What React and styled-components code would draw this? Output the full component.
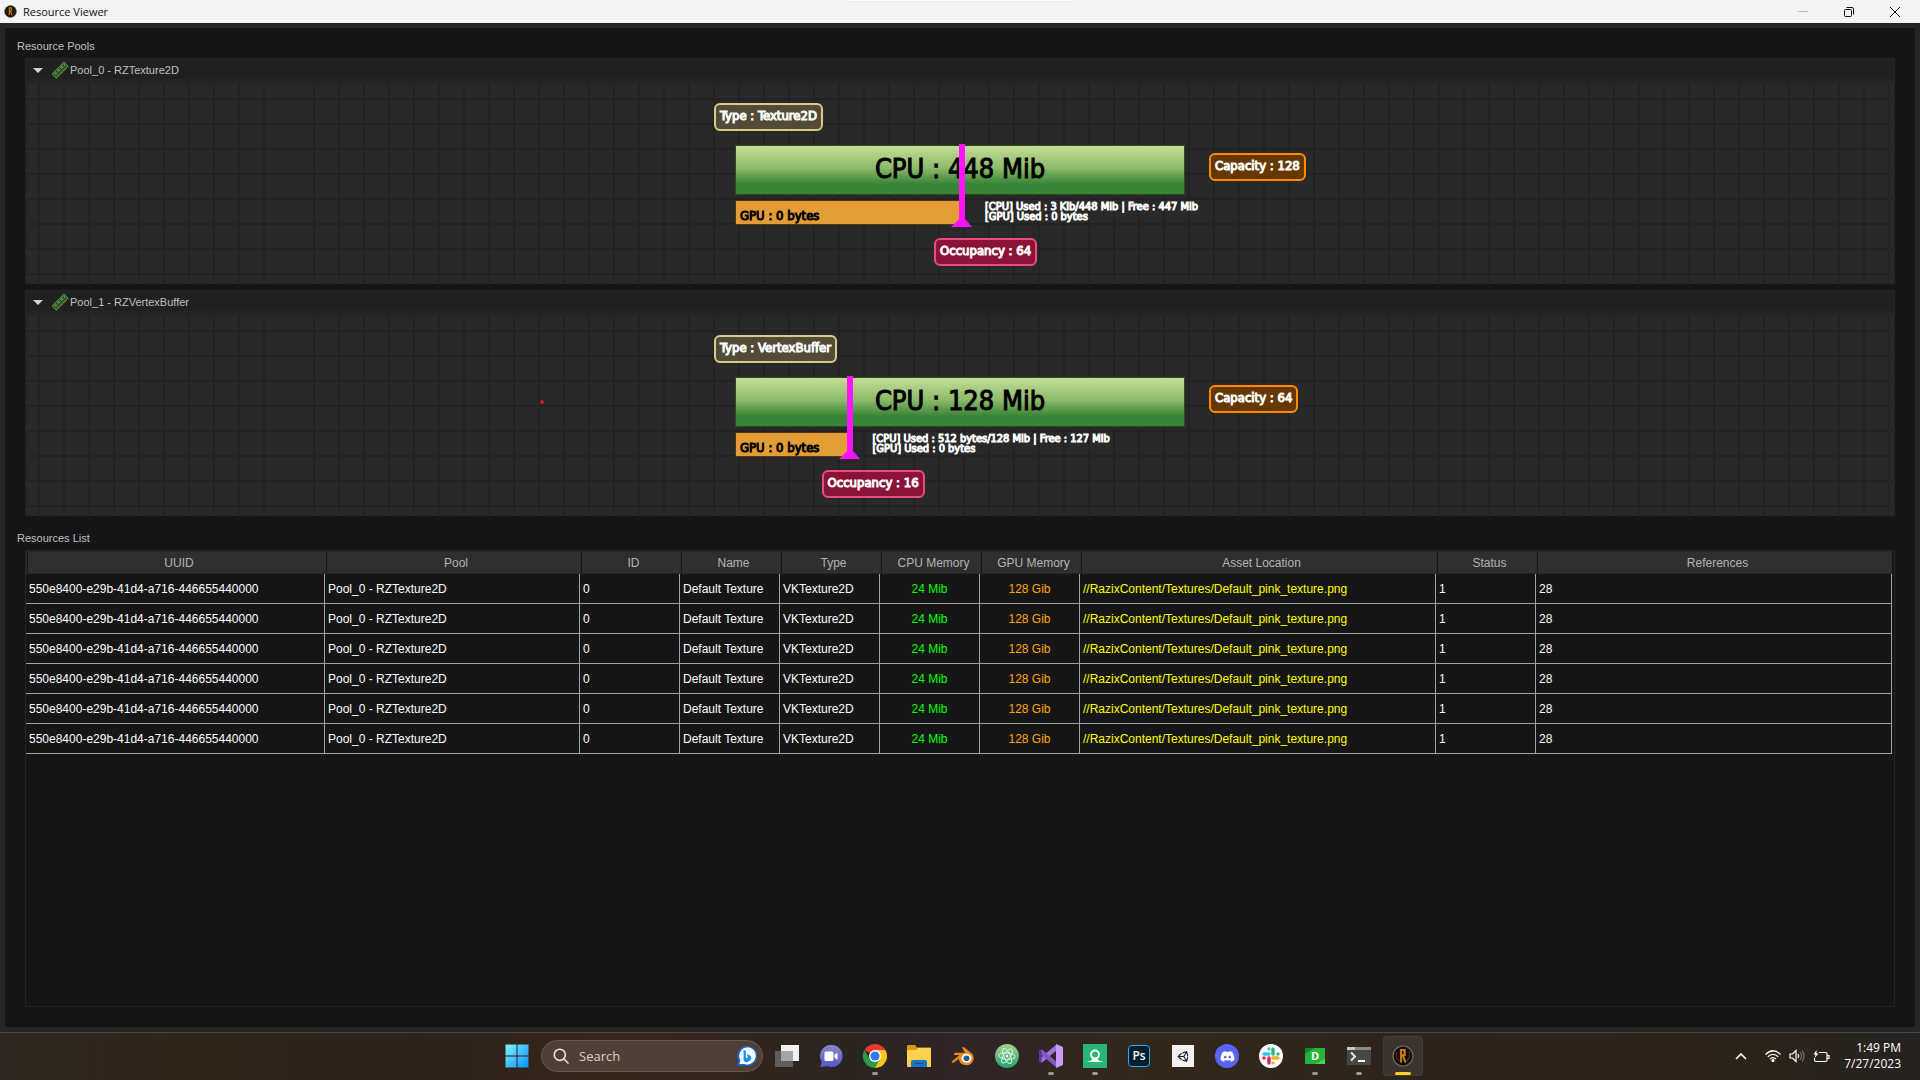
/* eslint-disable react/prop-types */
import styled, { createGlobalStyle, css } from "styled-components";
import { FaDiscord, FaUnity } from "react-icons/fa";

const GlobalStyle = createGlobalStyle`
  *, *::before, *::after {
    box-sizing: border-box;
  }
  body {
    margin: 0;
    background: #161616;
    font-family: "Liberation Sans", Arial, sans-serif;
    font-size: 12px;
  }
  button {
    border: 0;
    padding: 0;
    background: none;
    font: inherit;
    color: inherit;
  }
  svg {
    display: block;
  }
`;

const Desktop = styled.div`
  display: flex;
  flex-direction: column;
  min-height: 100vh;
`;

/* ---------- window ---------- */

const TitleBar = styled.header`
  position: relative;
  display: flex;
  align-items: center;
  height: 23px;
  padding: 0 2px 0 4px;
  background: #f3f3f3;
  color: #111;
  /* snap layout handle peeking from the top edge */
  &::after {
    content: "";
    position: absolute;
    top: 0;
    left: 50%;
    width: 224px;
    height: 1px;
    margin-left: -112px;
    background: #fff;
    box-shadow: 0 1px 1px #e4e4e4;
  }
`;

const Title = styled.h1`
  flex: 1;
  margin: 0 0 0 6px;
  font: 400 11px/16px "Open Sans", "Noto Sans", sans-serif;
`;

const WindowButton = styled.button`
  display: flex;
  align-items: center;
  justify-content: center;
  width: 46px;
  height: 22px;
  color: ${({ $muted }) => ($muted ? "#bdbdbd" : "#111")};
`;

const WindowBody = styled.main`
  flex: 1;
  display: flex;
  flex-direction: column;
  padding: 10px 20px 20px;
  border: 5px solid #252525;
  background: #161616;
`;

const labelText = css`
  font-size: 11px;
  font-weight: 400;
  line-height: 16px;
  color: #c0c0c0;
`;

const GroupLabel = styled.h2`
  ${labelText}
  margin: 0 0 4px -8px;
`;

const PoolList = styled.div`
  display: flex;
  flex-direction: column;
  gap: 6px;
  margin-bottom: 14px;
`;

/* ---------- pool panel ---------- */

const Panel = styled.section`
  border: 1px solid #252525;
  background: #252525;
`;

const PanelHeader = styled.button`
  ${labelText}
  display: flex;
  align-items: center;
  width: 100%;
  height: 20px;
  padding: 2px 0 0 7px;
  background: #202020;
`;

const Caret = styled.svg`
  width: 10px;
  height: 5px;
  margin-right: 8px;
  fill: #d2d2d2;
`;

const PanelTitle = styled.span`
  margin-left: 1px;
`;

const Scene = styled.div`
  position: relative;
  display: grid;
  grid-template-columns: 1fr 450px 1fr;
  grid-template-rows: 37px 50px 25px 36px;
  row-gap: 5px;
  margin: 5px 1px 0;
  padding: 19px 0 17px;
  background:
    linear-gradient(#232323 2px, transparent 2px) 0 14px / 100% 25px,
    linear-gradient(#292929, #292929) 261px 0 / 2px 100% no-repeat,
    linear-gradient(90deg, #232323 2px, transparent 2px) 11px 0 / 25px 100%,
    #292929;
`;

const sceneText = css`
  font-family: "DejaVu Sans Condensed", "DejaVu Sans", Tahoma, sans-serif;
  font-stretch: condensed;
  white-space: nowrap;
`;

const tones = {
  type: { line: "#dcc988", fill: "#514b37" },
  capacity: { line: "#ff8c00", fill: "#663800" },
  occupancy: { line: "#e84d7e", fill: "#8b1338" },
};

const Badge = styled.span`
  ${sceneText}
  align-self: start;
  justify-self: start;
  height: 28px;
  padding: 0 4px;
  border: 2px solid ${({ $tone }) => tones[$tone].line};
  border-radius: 6px;
  background: ${({ $tone }) => tones[$tone].fill};
  color: #fff;
  font-size: 13px;
  line-height: 22px;
  -webkit-text-stroke: 1px #fff;
`;

const TypeBadge = styled(Badge)`
  grid-area: 1 / 2;
  margin-left: -21px;
`;

const CapacityBadge = styled(Badge)`
  grid-area: 2 / 3;
  margin: 8px 0 0 24px;
`;

const OccupancyBadge = styled(Badge)`
  grid-area: 4 / 2;
  align-self: end;
  margin-left: calc(${({ $percent }) => $percent}% - 26px);
`;

const CpuBar = styled.div`
  ${sceneText}
  grid-area: 2 / 2;
  border: 1px solid #2c4a20;
  background: linear-gradient(#c5dd96, #8fbb6c 45%, #388336 80%);
  color: #000;
  font-size: 27px;
  line-height: 45px;
  text-align: center;
  -webkit-text-stroke: 1px #000;
`;

const GpuRow = styled.div`
  ${sceneText}
  grid-area: 3 / 2;
  display: flex;
`;

const GpuBar = styled.div`
  flex: none;
  width: ${({ $percent }) => $percent}%;
  height: 25px;
  padding-left: 4px;
  border: 1px solid #4f3710;
  background: #e49d36;
  color: #000;
  font-size: 13px;
  line-height: 30px;
  -webkit-text-stroke: 1px #000;
`;

const Usage = styled.div`
  margin-left: 25px;
  padding-top: 2px;
  color: #fff;
  font-size: 11px;
  line-height: 10px;
  -webkit-text-stroke: 1px #fff;
`;

const Marker = styled.svg`
  grid-area: 2 / 2 / 4 / 3;
  width: 21px;
  height: 83px;
  margin: -1px 0 0 calc(${({ $percent }) => $percent}% - 9px);
  fill: #ff14ff;
`;

const Probe = styled.span`
  position: absolute;
  left: 27.5%;
  top: 42%;
  width: 4px;
  height: 4px;
  border-radius: 50%;
  background: #d01c2c;
`;

/* ---------- resource table ---------- */

const TableFrame = styled.div`
  flex: 1;
  padding-right: 2px;
  border: 1px solid #252525;
`;

const Table = styled.table`
  width: 100%;
  table-layout: fixed;
  border-collapse: separate;
  border-spacing: 0;
  font-size: 12px;
`;

const HeadCell = styled.th`
  height: 23px;
  padding: 0 0 0 7px;
  border-top: 1px solid #252525;
  border-bottom: 1px solid #252525;
  background: linear-gradient(90deg, #2f2f2f 1px, #161616 1px 2px, #2f2f2f 2px);
  color: #b4b4b4;
  font-weight: 400;
`;

const Cell = styled.td`
  height: 30px;
  padding: ${({ $center }) => ($center ? "0" : "0 0 0 3px")};
  border-right: 1px solid #a2a2a2;
  border-bottom: 1px solid #a2a2a2;
  color: ${({ $color }) => $color || "#fff"};
  text-align: ${({ $center }) => ($center ? "center" : "left")};
  white-space: nowrap;
  overflow: hidden;
`;

/* ---------- taskbar ---------- */

const Taskbar = styled.footer`
  display: grid;
  grid-template-columns: 1fr auto 1fr;
  align-items: center;
  height: 48px;
  padding-bottom: 1px;
  border-top: 1px solid #4a4642;
  background: linear-gradient(
    90deg,
    #2d2721,
    #302617 10%,
    #2c241c 22%,
    #382519 32%,
    #2b2521 44%,
    #2f2427 50%,
    #32281a 60%,
    #2c241d 75%,
    #2d2418 87%,
    #252321
  );
  color: #fff;
  font-family: "Open Sans", "Noto Sans", sans-serif;
`;

const Dock = styled.nav`
  grid-column: 2;
  display: flex;
  align-items: center;
  gap: 4px;
`;

const DockButton = styled.button`
  position: relative;
  display: flex;
  align-items: center;
  justify-content: center;
  width: 40px;
  height: 40px;
  border-radius: 4px;
  ${({ $active }) =>
    $active &&
    css`
      background: #3a332e;
      box-shadow: inset 0 0 0 1px #433c37;
    `}
  ${({ $running, $active }) =>
    $running &&
    css`
      &::after {
        content: "";
        position: absolute;
        bottom: 1px;
        left: 50%;
        width: ${$active ? 16 : 6}px;
        height: 3px;
        border-radius: 2px;
        background: ${$active ? "#ffd22b" : "#9b9794"};
        transform: translateX(-50%);
      }
    `}
`;

const SearchBox = styled.label`
  display: flex;
  align-items: center;
  width: 222px;
  height: 32px;
  padding: 0 5px 0 11px;
  border: 1px solid #66574e;
  border-radius: 16px;
  background: #503f35;
`;

const SearchInput = styled.input`
  flex: 1;
  min-width: 0;
  margin-left: 10px;
  padding: 0;
  border: 0;
  outline: 0;
  background: none;
  color: #fff;
  font: 13px/18px "Open Sans", "Noto Sans", sans-serif;
  &::placeholder {
    color: #d6d0cc;
    opacity: 1;
  }
`;

const Tray = styled.div`
  display: flex;
  align-items: center;
  justify-content: flex-end;
  padding-right: 19px;
`;

const TrayButton = styled.button`
  display: flex;
  align-items: center;
  justify-content: center;
  width: ${({ $wide }) => ($wide ? 40 : 24)}px;
  height: 40px;
`;

const Clock = styled.time`
  width: 68px;
  font-size: 12px;
  line-height: 16px;
  text-align: right;
`;

/* ---------- drawings ---------- */

const RazixIcon = ({ size }) => (
  <svg width={size} height={size} viewBox="0 0 22 22">
    <circle cx="11" cy="11" r="10" fill="#120d0a" stroke="#77716c" strokeWidth="1.200" />
    <path d="M5 7q-2 5 2 9M17 6q2 5-2 10" stroke="#4a2a12" strokeWidth="1.600" fill="none" />
    <path d="M9 17.500V5h3.600v5H9.400M11 10.500l2.400 7" fill="none" stroke="#c07a18" strokeWidth="2.200" />
  </svg>
);

const RamIcon = () => (
  <svg width="18" height="18" viewBox="0 0 18 18">
    <path d="M1 13 13 1l4 4L5 17z" fill="#2f5a1c" stroke="#4f9a24" />
    <path d="M5.500 17.500 17.500 6" stroke="#9a7a22" strokeDasharray="1 1" />
    <path d="m4 13 1.500-1.500M7 10l1.500-1.500M10 7l1.500-1.500M13 4.500 14 3.500" stroke="#6d8396" strokeWidth="2.200" />
  </svg>
);

const StartIcon = () => (
  <svg width="24" height="24" viewBox="0 0 24 24">
    <defs>
      <linearGradient id="win" x1="0" y1="0" x2="1" y2="1">
        <stop offset="0" stopColor="#7df3ff" />
        <stop offset="1" stopColor="#0a8ff5" />
      </linearGradient>
    </defs>
    <path d="M.5.5h11v11H.5zM12.500.5h11v11h-11zM.5 12.500h11v11H.5zM12.500 12.500h11v11h-11z" fill="url(#win)" />
  </svg>
);

const MagnifierIcon = () => (
  <svg width="16" height="16" viewBox="0 0 16 16" fill="none" stroke="#e8e4e1" strokeWidth="1.600" strokeLinecap="round">
    <circle cx="6.800" cy="6.800" r="5.600" />
    <path d="m11 11 4 4" />
  </svg>
);

const BingIcon = () => (
  <svg width="20" height="20" viewBox="0 0 20 20">
    <path d="M10 0a10 10 0 1 1-3 19.500L0 20l1.500-5A10 10 0 0 1 10 0z" fill="#1565d8" />
    <path d="M10.300 1.200a8.600 8.600 0 1 1-3 16.700L2.500 18l.8-4A8.600 8.600 0 0 1 10.300 1.200z" fill="#f4faff" />
    <path d="M6.600 3.800v9.500c0 3 3 3.400 5 2.200 3.600-2 3.500-5.400.5-6.500l-2.400-.8 1.300 3-2.100 1.100V5z" fill="#1f8fe8" />
  </svg>
);

const TaskViewIcon = () => (
  <svg width="24" height="22" viewBox="0 0 24 22">
    <path d="M6 0h18v16H6z" fill="#f1f1f1" />
    <path d="M0 6h18v16H0z" fill="#5d5d5d" />
    <path d="M6 6h12v10H6z" fill="#a5a5a5" />
  </svg>
);

const ChatIcon = () => (
  <svg width="24" height="24" viewBox="0 0 24 24">
    <defs>
      <linearGradient id="chat" x1="0" y1="0" x2="0" y2="1">
        <stop offset="0" stopColor="#8f86c4" />
        <stop offset="1" stopColor="#5458cf" />
      </linearGradient>
    </defs>
    <path d="M12.500 1a11 11 0 1 1-4 21.200L1 23l1.800-5A11 11 0 0 1 12.500 1z" fill="url(#chat)" />
    <rect x="5.500" y="7.500" width="9" height="9.500" rx="1.500" fill="#fff" />
    <path d="m15.500 11 3-2.500v7.500l-3-2.500z" fill="#fff" />
  </svg>
);

const ChromeIcon = () => (
  <svg width="24" height="24" viewBox="0 0 24 24">
    <path d="M12 12 1.600 6A12 12 0 0 1 22.400 6z" fill="#e63b2e" />
    <path d="M12 12V6h10.400A12 12 0 0 1 12 24z" fill="#fcc31e" />
    <path d="m12 12 5 3-5 9A12 12 0 0 1 1.600 6l5.200 9z" fill="#2b9b47" />
    <circle cx="12" cy="12" r="6" fill="#fff" />
    <circle cx="12" cy="12" r="4.600" fill="#2f7bf0" />
  </svg>
);

const FolderIcon = () => (
  <svg width="24" height="22" viewBox="0 0 24 22">
    <path d="M0 1q0-1 1-1h7l2 2.500h14V8H0z" fill="#dd9a0c" />
    <path d="M0 5h9l2-2h13v18q0 1-1 1H1q-1 0-1-1z" fill="#ffd052" />
    <path d="M4 22v-5q0-2 2-2h12q2 0 2 2v5z" fill="#1976c8" />
    <path d="M8 18h8v1H8z" fill="#0f4f93" />
  </svg>
);

const BlenderIcon = () => (
  <svg width="24" height="20" viewBox="0 0 24 20">
    <path d="M11 1.500q1-1.200 2.400 0l7.800 6.200a7.200 7.200 0 0 1-4.800 11.500c-5.500.6-8.600-3-8.500-6.500L3 16.500q-2 .8-2.500-.8L8.500 9H3.700q-1.200-1.200.3-2.300h10z" fill="#f0861a" />
    <ellipse cx="15.500" cy="12.200" rx="5" ry="4.500" fill="#fff" />
    <ellipse cx="15.500" cy="12.200" rx="3" ry="2.800" fill="#1f5c9b" />
  </svg>
);

const AtomIcon = () => (
  <svg width="24" height="24" viewBox="0 0 24 24">
    <defs>
      <linearGradient id="atom" x1="0" y1="0" x2="0" y2="1">
        <stop offset="0" stopColor="#a3d48c" />
        <stop offset="1" stopColor="#1fa36f" />
      </linearGradient>
    </defs>
    <circle cx="12" cy="12" r="12" fill="url(#atom)" />
    <g fill="none" stroke="#e9f8ee" strokeWidth="0.900">
      <ellipse cx="12" cy="12" rx="3.200" ry="8.300" transform="rotate(-25 12 12)" />
      <ellipse cx="12" cy="12" rx="3.200" ry="8.300" transform="rotate(35 12 12)" />
      <ellipse cx="12" cy="12" rx="3.200" ry="8.300" transform="rotate(95 12 12)" />
    </g>
    <circle cx="12" cy="12" r="1.200" fill="#fff" />
  </svg>
);

const VisualStudioIcon = () => (
  <svg width="24" height="24" viewBox="0 0 24 24">
    <path d="M0 17.500V6.500L2.500 5v14z" fill="#5e3699" />
    <path d="m2.500 19 15.500-13V0L2.500 13z" fill="#a073e0" />
    <path d="M2.500 5 18 18v6L2.500 11z" fill="#8456c6" />
    <path d="m17 0 7 3v18l-7 3z" fill="#c79bf7" />
  </svg>
);

const PersonIcon = () => (
  <svg width="24" height="24" viewBox="0 0 24 24">
    <path d="M0 0h24v24H0z" fill="#29b573" />
    <path d="M3 18q5.500-.5 6.500-3.500h5q1 3 6.500 3.500z" fill="#fff" />
    <circle cx="12" cy="10.500" r="4" fill="#29b573" stroke="#fff" strokeWidth="2" />
  </svg>
);

const PhotoshopTile = styled.span`
  width: 22px;
  height: 22px;
  border: 1px solid #31a8ff;
  border-radius: 4px;
  background: #001e2b;
  color: #fff;
  font-size: 12px;
  font-weight: 600;
  line-height: 19px;
  text-align: center;
`;

const UnityTile = styled.span`
  display: flex;
  align-items: center;
  justify-content: center;
  width: 22px;
  height: 22px;
  background: #f2f2f2;
  color: #222;
  font-size: 13px;
`;

const RoundTile = styled.span`
  display: flex;
  align-items: center;
  justify-content: center;
  width: 24px;
  height: 24px;
  border-radius: 50%;
  background: ${({ $color }) => $color};
  color: #fff;
  font-size: 15px;
`;

const SlackIcon = () => (
  <svg width="18" height="18" viewBox="0 0 18 18" strokeWidth="3.400" strokeLinecap="round">
    <path d="M7 2v0M2 7h5" stroke="#36c5f0" />
    <path d="M11 7V2M16 7v0" stroke="#2eb67d" />
    <path d="M11 11h5M11 16v0" stroke="#ecb22e" />
    <path d="M7 11v5M2 11v0" stroke="#e01e5a" />
  </svg>
);

const DTile = styled.span`
  width: 20px;
  height: 16px;
  background: linear-gradient(150deg, #14852a 20%, #26b33c 21% 80%, #53ce5c 81%);
  color: #fff;
  font-size: 11px;
  font-weight: 700;
  line-height: 16px;
  text-align: center;
`;

const TerminalIcon = () => (
  <svg width="24" height="18" viewBox="0 0 24 18">
    <path d="M0 0h24v18H0z" fill="#474747" />
    <path d="M0 0h24v3H0z" fill="#8a8a8a" />
    <path d="M0 0h8v3H0z" fill="#c9c9c9" />
    <path d="m4 5.500 4 4-4 4" fill="none" stroke="#e5e5e5" strokeWidth="2" />
    <path d="M11 14h7" stroke="#fff" strokeWidth="2" />
  </svg>
);

/* ---------- data ---------- */

const pools = [
  {
    name: "Pool_0 - RZTexture2D",
    type: "Texture2D",
    cpu: "448 Mib",
    used: "3 Kib/448 Mib | Free : 447 Mib",
    capacity: 128,
    occupancy: 64,
  },
  {
    name: "Pool_1 - RZVertexBuffer",
    type: "VertexBuffer",
    cpu: "128 Mib",
    used: "512 bytes/128 Mib | Free : 127 Mib",
    capacity: 64,
    occupancy: 16,
    probe: true,
  },
];

const columns = [
  { title: "UUID", width: 299, value: "550e8400-e29b-41d4-a716-446655440000" },
  { title: "Pool", width: 255, value: "Pool_0 - RZTexture2D" },
  { title: "ID", width: 100, value: "0" },
  { title: "Name", width: 100, value: "Default Texture" },
  { title: "Type", width: 100, value: "VKTexture2D" },
  { title: "CPU Memory", width: 100, value: "24 Mib", color: "#00ff00", center: true },
  { title: "GPU Memory", width: 100, value: "128 Gib", color: "#ffa500", center: true },
  { title: "Asset Location", value: "//RazixContent/Textures/Default_pink_texture.png", color: "#ffff00" },
  { title: "Status", width: 100, value: "1" },
  { title: "References", value: "28" },
];

const rows = [0, 1, 2, 3, 4, 5];

const apps = [
  { label: "Task View", icon: <TaskViewIcon /> },
  { label: "Chat", icon: <ChatIcon /> },
  { label: "Chrome", icon: <ChromeIcon />, running: true },
  { label: "File Explorer", icon: <FolderIcon /> },
  { label: "Blender", icon: <BlenderIcon /> },
  { label: "Atom", icon: <AtomIcon /> },
  { label: "Visual Studio", icon: <VisualStudioIcon />, running: true },
  { label: "Account", icon: <PersonIcon />, running: true },
  { label: "Photoshop", icon: <PhotoshopTile>Ps</PhotoshopTile> },
  { label: "Unity", icon: <UnityTile><FaUnity /></UnityTile> },
  { label: "Discord", icon: <RoundTile $color="#5865f2"><FaDiscord /></RoundTile> },
  { label: "Slack", icon: <RoundTile $color="#fff"><SlackIcon /></RoundTile> },
  { label: "D", icon: <DTile>D</DTile>, running: true },
  { label: "Terminal", icon: <TerminalIcon />, running: true },
  { label: "Razix", icon: <RazixIcon size={22} />, running: true, active: true },
];

/* ---------- components ---------- */

function PoolPanel({ pool }) {
  // the marker and the GPU bar both end at occupancy / capacity
  const percent = (pool.occupancy / pool.capacity) * 100;
  return (
    <Panel>
      <PanelHeader aria-expanded="true">
        <Caret viewBox="0 0 10 5">
          <path d="M0 0h10L5 5z" />
        </Caret>
        <RamIcon />
        <PanelTitle>{pool.name}</PanelTitle>
      </PanelHeader>
      <Scene>
        <TypeBadge $tone="type">Type : {pool.type}</TypeBadge>
        <CpuBar>CPU : {pool.cpu}</CpuBar>
        <CapacityBadge $tone="capacity">Capacity : {pool.capacity}</CapacityBadge>
        <GpuRow>
          <GpuBar $percent={percent}>GPU : 0 bytes</GpuBar>
          <Usage>
            <div>[CPU] Used : {pool.used}</div>
            <div>[GPU] Used : 0 bytes</div>
          </Usage>
        </GpuRow>
        <OccupancyBadge $tone="occupancy" $percent={percent}>
          Occupancy : {pool.occupancy}
        </OccupancyBadge>
        <Marker $percent={percent} viewBox="0 0 21 83">
          <path d="M8 0h6v75l7 8H0l8-8z" />
        </Marker>
        {pool.probe && <Probe />}
      </Scene>
    </Panel>
  );
}

function ResourceTable() {
  return (
    <TableFrame>
      <Table aria-labelledby="resources-list">
        <colgroup>
          {columns.map(({ title, width }) => (
            <col key={title} width={width} />
          ))}
        </colgroup>
        <thead>
          <tr>
            {columns.map(({ title }) => (
              <HeadCell key={title} scope="col">
                {title}
              </HeadCell>
            ))}
          </tr>
        </thead>
        <tbody>
          {rows.map((row) => (
            <tr key={row}>
              {columns.map(({ title, value, color, center }) => (
                <Cell key={title} $color={color} $center={center}>
                  {value}
                </Cell>
              ))}
            </tr>
          ))}
        </tbody>
      </Table>
    </TableFrame>
  );
}

export default function App() {
  return (
    <Desktop>
      <GlobalStyle />
      <TitleBar>
        <RazixIcon size={13} />
        <Title>Resource Viewer</Title>
        <WindowButton aria-label="Minimize" $muted>
          <svg width="10" height="10" viewBox="0 0 10 10">
            <path d="M0 4h10v1H0z" fill="currentColor" />
          </svg>
        </WindowButton>
        <WindowButton aria-label="Restore">
          <svg width="10" height="10" viewBox="0 0 10 10" fill="none" stroke="currentColor">
            <rect x="0.500" y="2.500" width="7" height="7" rx="1" />
            <path d="M2.500.5H8q1.500 0 1.500 1.500v5.500" />
          </svg>
        </WindowButton>
        <WindowButton aria-label="Close">
          <svg width="10" height="10" viewBox="0 0 10 10" stroke="currentColor">
            <path d="m0 0 10 10M10 0 0 10" />
          </svg>
        </WindowButton>
      </TitleBar>

      <WindowBody>
        <GroupLabel>Resource Pools</GroupLabel>
        <PoolList>
          {pools.map((pool) => (
            <PoolPanel key={pool.name} pool={pool} />
          ))}
        </PoolList>
        <GroupLabel id="resources-list">Resources List</GroupLabel>
        <ResourceTable />
      </WindowBody>

      <Taskbar>
        <Dock>
          <DockButton aria-label="Start">
            <StartIcon />
          </DockButton>
          <SearchBox>
            <MagnifierIcon />
            <SearchInput type="text" placeholder="Search" aria-label="Search" />
            <BingIcon />
          </SearchBox>
          {apps.map(({ label, icon, running, active }) => (
            <DockButton key={label} aria-label={label} $running={running} $active={active}>
              {icon}
            </DockButton>
          ))}
        </Dock>
        <Tray>
          <TrayButton aria-label="Show hidden icons" $wide>
            <svg width="12" height="7" viewBox="0 0 12 7" fill="none" stroke="#fff" strokeWidth="1.600">
              <path d="m1 6 5-5 5 5" />
            </svg>
          </TrayButton>
          <TrayButton aria-label="Network">
            <svg width="16" height="12" viewBox="0 0 16 12" fill="none" stroke="#fff" strokeWidth="1.200">
              <path d="M.5 4.500q7.500-7.500 15 0M2.800 6.800q5.200-5 10.400 0M5 9q3-2.800 6 0" />
              <circle cx="8" cy="10.500" r="1" fill="#fff" />
            </svg>
          </TrayButton>
          <TrayButton aria-label="Volume">
            <svg width="16" height="14" viewBox="0 0 16 14" fill="none" stroke="#fff" strokeWidth="1.200">
              <path d="M1 5h2.500L7 1.500v11L3.500 9H1zM9 5q1.200 2 0 4" />
              <path d="M11 3q3 4 0 8M13 1.500q4 5.500 0 11" stroke="#77726e" />
            </svg>
          </TrayButton>
          <TrayButton aria-label="Battery">
            <svg width="17" height="13" viewBox="0 0 17 13" fill="none" stroke="#fff" strokeWidth="1.200">
              <path d="M6 2.500h6.500q1.500 0 1.500 1.500v6q0 1.500-1.500 1.500H3q-1.500 0-1.500-1.500V8M14.500 5.500h1.500v3h-1.500" />
              <path d="M3.500 0 .5 4.500h2L1.500 8l4-4.500h-2z" fill="#fff" stroke="none" />
            </svg>
          </TrayButton>
          <Clock>
            1:49 PM
            <br />
            7/27/2023
          </Clock>
        </Tray>
      </Taskbar>
    </Desktop>
  );
}
